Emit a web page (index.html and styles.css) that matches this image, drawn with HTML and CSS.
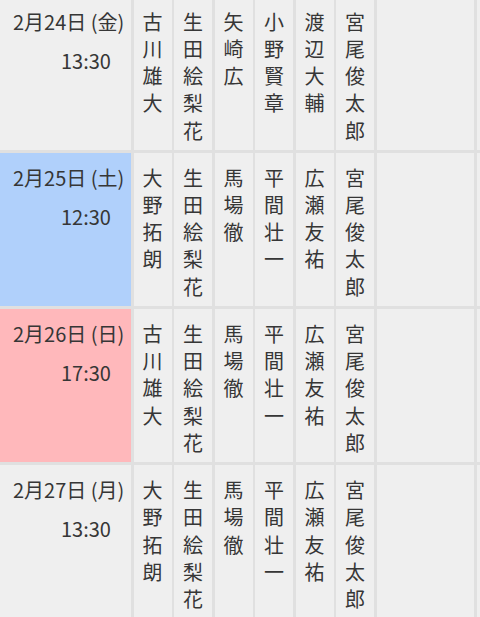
FILE: index.html
```html
<!DOCTYPE html>
<html lang="ja">
<head>
<meta charset="utf-8">
<link rel="stylesheet" href="styles.css">
</head>
<body>
<div class="schedule">
  <div class="cell date"><div class="day">2月24日 (金)</div><div class="time">13:30</div></div>
  <div class="cell name"><span>古川雄大</span></div>
  <div class="cell name"><span>生田絵梨花</span></div>
  <div class="cell name"><span>矢崎広</span></div>
  <div class="cell name"><span>小野賢章</span></div>
  <div class="cell name"><span>渡辺大輔</span></div>
  <div class="cell name"><span>宮尾俊太郎</span></div>
  <div class="cell"></div>
  <div class="cell"></div>

  <div class="cell date sat"><div class="day">2月25日 (土)</div><div class="time">12:30</div></div>
  <div class="cell name"><span>大野拓朗</span></div>
  <div class="cell name"><span>生田絵梨花</span></div>
  <div class="cell name"><span>馬場徹</span></div>
  <div class="cell name"><span>平間壮一</span></div>
  <div class="cell name"><span>広瀬友祐</span></div>
  <div class="cell name"><span>宮尾俊太郎</span></div>
  <div class="cell"></div>
  <div class="cell"></div>

  <div class="cell date sun"><div class="day">2月26日 (日)</div><div class="time">17:30</div></div>
  <div class="cell name"><span>古川雄大</span></div>
  <div class="cell name"><span>生田絵梨花</span></div>
  <div class="cell name"><span>馬場徹</span></div>
  <div class="cell name"><span>平間壮一</span></div>
  <div class="cell name"><span>広瀬友祐</span></div>
  <div class="cell name"><span>宮尾俊太郎</span></div>
  <div class="cell"></div>
  <div class="cell"></div>

  <div class="cell date"><div class="day">2月27日 (月)</div><div class="time">13:30</div></div>
  <div class="cell name"><span>大野拓朗</span></div>
  <div class="cell name"><span>生田絵梨花</span></div>
  <div class="cell name"><span>馬場徹</span></div>
  <div class="cell name"><span>平間壮一</span></div>
  <div class="cell name"><span>広瀬友祐</span></div>
  <div class="cell name"><span>宮尾俊太郎</span></div>
  <div class="cell"></div>
  <div class="cell"></div>
</div>
</body>
</html>
```

FILE: styles.css
```css
html, body {
  margin: 0;
  padding: 0;
  width: 480px;
  height: 617px;
  overflow: hidden;
  background: #e0e0e0;
}

.schedule {
  display: grid;
  width: 480px;
  grid-template-columns: 131px 38px 38px 38px 38px 38px 38px 97.5px minmax(0, 1fr);
  grid-auto-rows: 153.2px;
  column-gap: 2.5px;
  row-gap: 3px;
  margin-top: -3.5px;
  font-family: "Noto Sans CJK JP", "Noto Sans", sans-serif;
  font-size: 20px;
  line-height: 27.25px;
  color: #363636;
}

.cell {
  background: #efefef;
  padding-top: 11px;
  box-sizing: border-box;
}

.date {
  padding-left: 13px;
}

.sat {
  background: #b0d0fb;
}

.sun {
  background: #ffb8bb;
}

.day {
  white-space: nowrap;
}

.time {
  margin-top: 12px;
  padding-left: 48px;
}

.name span {
  display: block;
  width: 1em;
  margin: 0 auto;
}
```
